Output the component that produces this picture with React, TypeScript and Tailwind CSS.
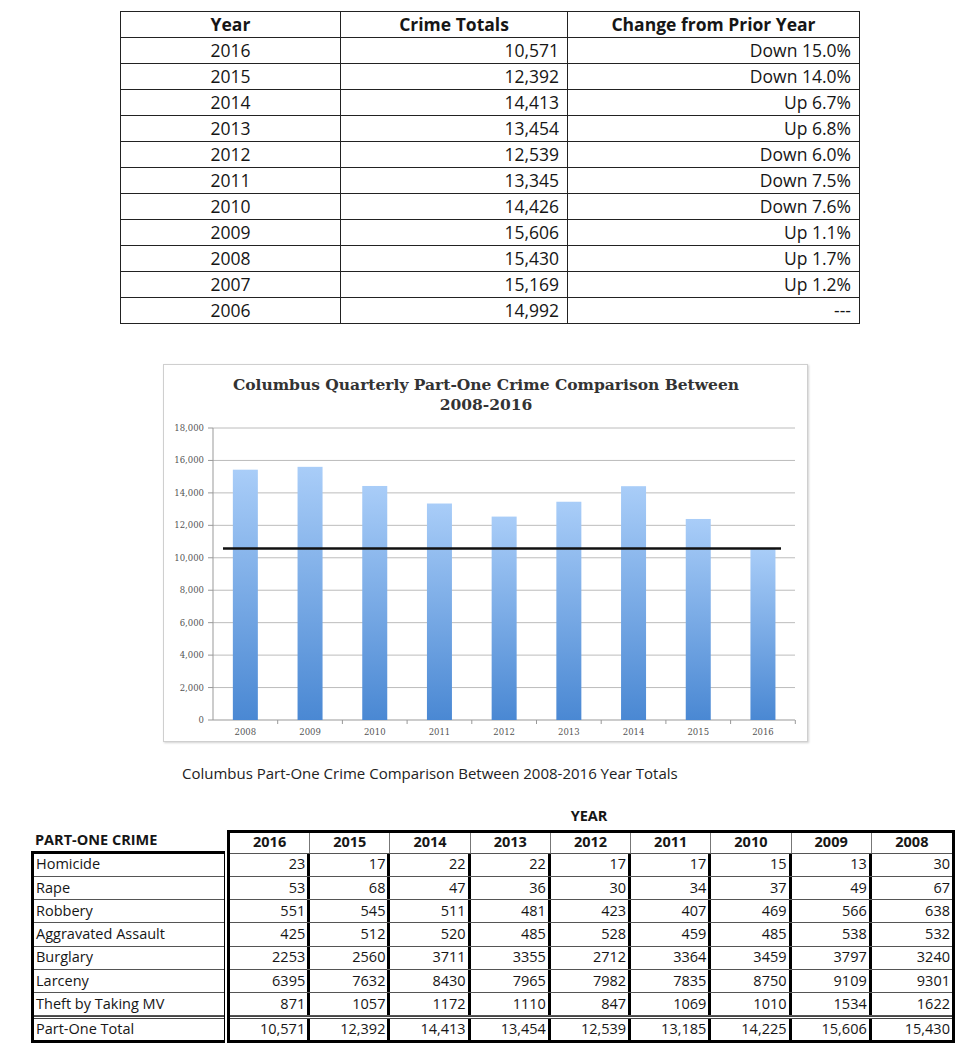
import React from 'react'

const summary = [
  { year: '2016', total: '10,571', change: 'Down 15.0%' },
  { year: '2015', total: '12,392', change: 'Down 14.0%' },
  { year: '2014', total: '14,413', change: 'Up 6.7%' },
  { year: '2013', total: '13,454', change: 'Up 6.8%' },
  { year: '2012', total: '12,539', change: 'Down 6.0%' },
  { year: '2011', total: '13,345', change: 'Down 7.5%' },
  { year: '2010', total: '14,426', change: 'Down 7.6%' },
  { year: '2009', total: '15,606', change: 'Up 1.1%' },
  { year: '2008', total: '15,430', change: 'Up 1.7%' },
  { year: '2007', total: '15,169', change: 'Up 1.2%' },
  { year: '2006', total: '14,992', change: '---' },
]

const bars = [
  { year: '2008', value: 15430 },
  { year: '2009', value: 15606 },
  { year: '2010', value: 14426 },
  { year: '2011', value: 13345 },
  { year: '2012', value: 12539 },
  { year: '2013', value: 13454 },
  { year: '2014', value: 14413 },
  { year: '2015', value: 12392 },
  { year: '2016', value: 10571 },
]

const years = ['2016', '2015', '2014', '2013', '2012', '2011', '2010', '2009', '2008']

const crimes = [
  { name: 'Homicide', values: ['23', '17', '22', '22', '17', '17', '15', '13', '30'] },
  { name: 'Rape', values: ['53', '68', '47', '36', '30', '34', '37', '49', '67'] },
  { name: 'Robbery', values: ['551', '545', '511', '481', '423', '407', '469', '566', '638'] },
  { name: 'Aggravated Assault', values: ['425', '512', '520', '485', '528', '459', '485', '538', '532'] },
  { name: 'Burglary', values: ['2253', '2560', '3711', '3355', '2712', '3364', '3459', '3797', '3240'] },
  { name: 'Larceny', values: ['6395', '7632', '8430', '7965', '7982', '7835', '8750', '9109', '9301'] },
  { name: 'Theft by Taking MV', values: ['871', '1057', '1172', '1110', '847', '1069', '1010', '1534', '1622'] },
]
const totals = ['10,571', '12,392', '14,413', '13,454', '12,539', '13,185', '14,225', '15,606', '15,430']

function SummaryTable() {
  return (
    <table className="ml-[120px] mt-[11px] border-collapse text-[17.5px] leading-none text-[#161616]">
      <thead>
        <tr className="h-[26px]">
          <th className="w-[220px] border border-[#222] font-bold">Year</th>
          <th className="w-[227px] border border-[#222] font-bold">Crime Totals</th>
          <th className="w-[292px] border border-[#222] font-bold">Change from Prior Year</th>
        </tr>
      </thead>
      <tbody>
        {summary.map(r => (
          <tr key={r.year} className="h-[26px]">
            <td className="border border-[#222] text-center">{r.year}</td>
            <td className="border border-[#222] pr-[8px] text-right">{r.total}</td>
            <td className="border border-[#222] pr-[8px] text-right">{r.change}</td>
          </tr>
        ))}
      </tbody>
    </table>
  )
}

function Chart() {
  const top = 63
  const base = 355
  const scale = (base - top) / 18000
  const left = 49
  const step = 64.7
  const ticks = [0, 2000, 4000, 6000, 8000, 10000, 12000, 14000, 16000, 18000]
  const lineY = base - 10571 * scale

  return (
    <div className="ml-[163px] mt-[40px] h-[378px] w-[645px] border border-[#cfcfcf] shadow-[1px_1px_2px_rgba(0,0,0,0.18)]">
      <svg width="643" height="376" viewBox="0 0 643 376">
        <defs>
          <linearGradient id="bar" x1="0" y1="0" x2="0" y2="1">
            <stop offset="0" stopColor="#a9cdf8" />
            <stop offset="1" stopColor="#4a88d3" />
          </linearGradient>
        </defs>
        <text x="322" y="25" textAnchor="middle" fontFamily="'DejaVu Serif', serif" fontWeight="bold" fontSize="15.5" fill="#333">
          Columbus Quarterly Part-One Crime Comparison Between
        </text>
        <text x="322" y="45" textAnchor="middle" fontFamily="'DejaVu Serif', serif" fontWeight="bold" fontSize="15.5" fill="#333">
          2008-2016
        </text>
        {ticks.map(t => {
          const y = base - t * scale
          return (
            <g key={t}>
              {t > 0 && <line x1={left} x2={631} y1={y} y2={y} stroke="#bcbcbc" strokeWidth="1" />}
              <line x1={left - 5} x2={left} y1={y} y2={y} stroke="#999" strokeWidth="1" />
              <text x={40} y={y + 3} textAnchor="end" fontFamily="'DejaVu Serif', serif" fontSize="8.5" fill="#555">
                {t.toLocaleString('en-US')}
              </text>
            </g>
          )
        })}
        <line x1={left} x2={left} y1={top} y2={base} stroke="#999" strokeWidth="1" />
        <line x1={left} x2={631} y1={base} y2={base} stroke="#999" strokeWidth="1" />
        {bars.map((b, i) => {
          const cx = left + step / 2 + i * step
          const y = base - b.value * scale
          return (
            <g key={b.year}>
              <rect x={cx - 12.5} y={y} width="25" height={base - y} fill="url(#bar)" />
              <line x1={left + (i + 1) * step} x2={left + (i + 1) * step} y1={base} y2={base + 4} stroke="#999" strokeWidth="1" />
              <text x={cx} y={370} textAnchor="middle" fontFamily="'DejaVu Serif', serif" fontSize="8.5" fill="#555">
                {b.year}
              </text>
            </g>
          )
        })}
        <line x1={59} x2={617} y1={lineY} y2={lineY} stroke="#111" strokeWidth="2.5" />
      </svg>
    </div>
  )
}

function CrimeTable() {
  return (
    <div className="mt-[28px] ml-[31px] flex items-end text-[14.5px] leading-none text-[#161616]">
      {/* label column */}
      <div className="w-[194px]">
        <div className="flex h-[24px] items-end pb-[3px] pl-[4px] font-bold">PART-ONE CRIME</div>
        <div className="border-y-[3px] border-l-[3px] border-r border-black">
          {crimes.map(c => (
            <div key={c.name} className="flex h-[23.25px] items-center border-b border-[#555] pl-[2px]">
              {c.name}
            </div>
          ))}
          <div className="flex h-[23.25px] items-center border-t-[3px] border-double border-[#444] pl-[2px]">
            Part-One Total
          </div>
        </div>
      </div>
      {/* year block */}
      <div className="ml-[2px]">
        <div className="mb-[6px] w-[724px] text-center font-bold">YEAR</div>
        <div className="w-[728px] border-[3px] border-black">
          <div className="flex h-[21px] border-b border-[#555]">
            {years.map((y, i) => (
              <div
                key={y}
                className={`flex w-[80.4px] items-center justify-center font-bold ${i < 8 ? 'border-r border-[#777]' : ''}`}
              >
                {y}
              </div>
            ))}
          </div>
          {crimes.map(c => (
            <div key={c.name} className="flex h-[23.25px] border-b border-[#555]">
              {c.values.map((v, i) => (
                <div
                  key={i}
                  className={`flex w-[80.4px] items-center justify-end pr-[2px] ${i < 8 ? 'border-r-[3px] border-black' : ''}`}
                >
                  {v}
                </div>
              ))}
            </div>
          ))}
          <div className="flex h-[23.25px] border-t-[3px] border-double border-[#444]">
            {totals.map((v, i) => (
              <div
                key={i}
                className={`flex w-[80.4px] items-center justify-end pr-[2px] ${i < 8 ? 'border-r-[3px] border-black' : ''}`}
              >
                {v}
              </div>
            ))}
          </div>
        </div>
      </div>
    </div>
  )
}

export default function App() {
  return (
    <div className="min-h-[1051px] w-[980px] bg-white pb-[8px]" style={{ fontFamily: "'Open Sans', 'Noto Sans', sans-serif" }}>
      <SummaryTable />
      <Chart />
      <p className="ml-[182px] mt-[24px] text-[15px] leading-none text-[#222]">
        Columbus Part-One Crime Comparison Between 2008-2016 Year Totals
      </p>
      <CrimeTable />
    </div>
  )
}
